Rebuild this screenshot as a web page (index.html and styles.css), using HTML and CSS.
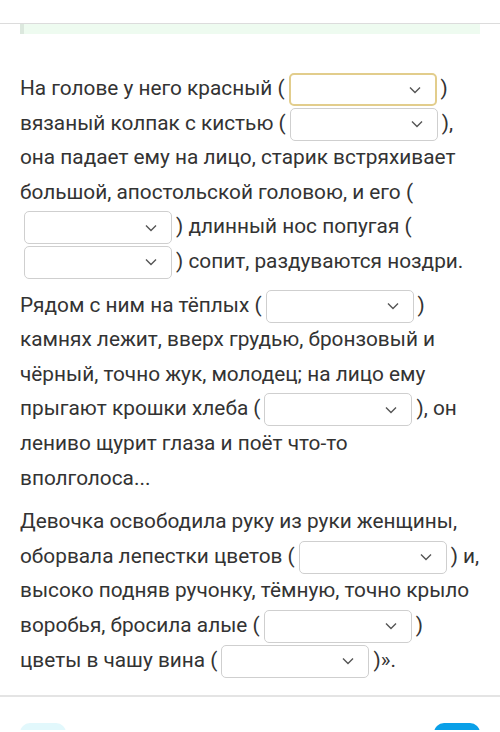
FILE: index.html
```html
<!DOCTYPE html>
<html lang="ru">
<head>
  <meta charset="UTF-8" />
  <meta name="viewport" content="width=device-width, initial-scale=1.0"/>
  <title>Задание</title>
  <link rel="stylesheet" href="styles.css">
</head>
<body>
  <div class="top-bar"></div>
  <div class="notice"></div>

  <div class="task">
    <p>На голове у него красный (<span class="gap active"><svg viewBox="0 0 12 8"><path d="M1 1.5 6 6.5 11 1.5"/></svg></span>) вязаный колпак с кистью (<span class="gap"><svg viewBox="0 0 12 8"><path d="M1 1.5 6 6.5 11 1.5"/></svg></span>), она падает ему на лицо, старик встряхивает большой, апостольской головою, и его (<span class="gap"><svg viewBox="0 0 12 8"><path d="M1 1.5 6 6.5 11 1.5"/></svg></span>) длинный нос попугая (<span class="gap"><svg viewBox="0 0 12 8"><path d="M1 1.5 6 6.5 11 1.5"/></svg></span>) сопит, раздуваются ноздри.</p>
    <p>Рядом с ним на тёплых (<span class="gap"><svg viewBox="0 0 12 8"><path d="M1 1.5 6 6.5 11 1.5"/></svg></span>) камнях лежит, вверх грудью, бронзовый и чёрный, точно жук, молодец; на лицо ему прыгают крошки хлеба (<span class="gap"><svg viewBox="0 0 12 8"><path d="M1 1.5 6 6.5 11 1.5"/></svg></span>), он лениво щурит глаза и поёт что-то вполголоса...</p>
    <p>Девочка освободила руку из руки женщины, оборвала лепестки цветов (<span class="gap"><svg viewBox="0 0 12 8"><path d="M1 1.5 6 6.5 11 1.5"/></svg></span>) и, высоко подняв ручонку, тёмную, точно крыло воробья, бросила алые (<span class="gap"><svg viewBox="0 0 12 8"><path d="M1 1.5 6 6.5 11 1.5"/></svg></span>) цветы в чашу вина (<span class="gap"><svg viewBox="0 0 12 8"><path d="M1 1.5 6 6.5 11 1.5"/></svg></span>)».</p>
  </div>

  <div class="footer">
    <div class="btn btn-light"></div>
    <div class="btn btn-blue"></div>
  </div>
</body>
</html>
```

FILE: styles.css
```css
* {
  box-sizing: border-box;
}

body {
  margin: 0;
  background: #fff;
  color: #333;
  font-family: Roboto, "Noto Sans", sans-serif;
  overflow: hidden;
}

.top-bar {
  height: 24px;
  border-bottom: 1px solid #dcdcdc;
}

.notice {
  margin: 0 20px;
  height: 10px;
  background: #eefbf0;
  border-left: 4px solid #dce8de;
}

.task {
  padding: 37px 20px 0;
  font-size: 20.8px;
  line-height: 34.6px;
}

.task p {
  margin: 0 0 9px;
}

/* drop-down blank; negative vertical margin keeps the line height even */
.gap {
  display: inline-flex;
  align-items: center;
  justify-content: flex-end;
  width: 148px;
  height: 33px;
  margin: -4px 4px;
  padding-right: 14px;
  border: 1px solid #cfcfcf;
  border-radius: 5px;
  vertical-align: middle;
  background: #fff;
}

.gap.active {
  border: 2px solid #e2cd8c;
}

.gap svg {
  width: 12px;
  height: 8px;
  fill: none;
  stroke: #555;
  stroke-width: 1.4;
}

.footer {
  height: 35px;
  overflow: hidden;
  margin-top: 18px;
  border-top: 2px solid #e4e4e4;
  padding: 26px 20px 0;
  display: flex;
  justify-content: space-between;
  align-items: flex-start;
}

.btn {
  width: 46px;
  height: 40px;
  flex-shrink: 0;
  border-radius: 10px;
}

.btn-light {
  background: #e2f8fc;
}

.btn-blue {
  background: #0aa0e8;
}
```
